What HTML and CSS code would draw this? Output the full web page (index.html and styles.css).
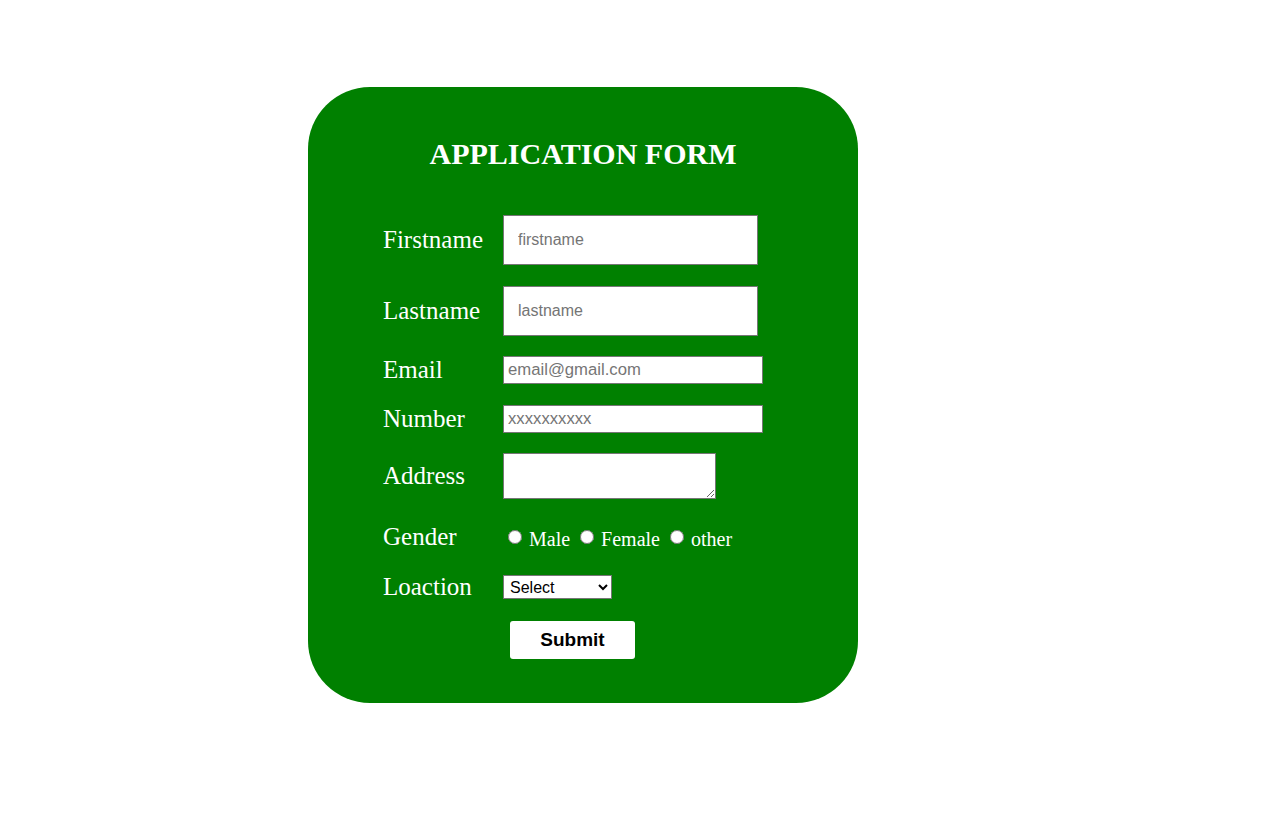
FILE: index.html
```html
<!DOCTYPE html>
<html>
<head>
<meta charset="utf-8">
<link rel="stylesheet" href="styles.css">
</head>
<body>
<div class="card">
  <h2 class="title">APPLICATION FORM</h2>
  <form class="form">
    <label class="lbl">Firstname</label>
    <div class="field"><input class="big" type="text" placeholder="firstname"></div>
    <label class="lbl">Lastname</label>
    <div class="field"><input class="big" type="text" placeholder="lastname"></div>
    <label class="lbl">Email</label>
    <div class="field"><input class="small" type="email" placeholder="email@gmail.com"></div>
    <label class="lbl">Number</label>
    <div class="field"><input class="small" type="text" placeholder="xxxxxxxxxx"></div>
    <label class="lbl">Address</label>
    <div class="field"><textarea class="area"></textarea></div>
    <label class="lbl">Gender</label>
    <div class="radios"><input type="radio" name="g" class="radio"> Male <input type="radio" name="g" class="radio"> Female <input type="radio" name="g" class="radio"> other</div>
    <label class="lbl">Loaction</label>
    <div class="field"><select class="sel"><option>Select</option></select></div>
    <div></div>
    <div class="field"><button type="button" class="submit">Submit</button></div>
  </form>
</div>
</body>
</html>
```
FILE: styles.css
```css
html, body {
  margin: 0;
  padding: 0;
  background: #ffffff;
}
body {
  font-family: "Liberation Serif", "Times New Roman", serif;
}
.card {
  margin: 87px 0 0 308px;
  width: 550px;
  height: 616px;
  box-sizing: border-box;
  background: #008000;
  border-radius: 62px;
  padding: 49px 0 0 75px;
}
.title {
  margin: 0 0 44px -75px;
  line-height: 35px;
  height: 35px;
  font-size: 30px;
  font-weight: bold;
  color: #ffffff;
  text-align: center;
}
.form {
  display: grid;
  grid-template-columns: 120px auto;
  row-gap: 20.5px;
  align-items: center;
  justify-items: start;
}
.lbl {
  color: #ffffff;
  font-size: 25px;
  line-height: 22px;
}
.field {
  display: flex;
  align-items: center;
}
.big {
  width: 255px;
  height: 50px;
  box-sizing: border-box;
  border: 1px solid #767676;
  padding: 0 14px;
  font-family: "Liberation Sans", Arial, sans-serif;
  font-size: 16px;
  margin: 0;
}
.small {
  width: 260px;
  height: 28px;
  box-sizing: border-box;
  border: 1px solid #767676;
  padding: 0 4px;
  font-family: "Liberation Sans", Arial, sans-serif;
  font-size: 16.7px;
  margin: 0;
}
.area {
  width: 213px;
  height: 46px;
  box-sizing: border-box;
  border: 1px solid #767676;
  margin: 0;
  resize: both;
}
.radios {
  color: #ffffff;
  font-size: 20px;
  line-height: 39px;
  height: 35px;
}
.radio {
  margin: 0 2px 0 5px;
  width: 14px;
  height: 14px;
  vertical-align: 2px;
}
.sel {
  width: 109px;
  height: 24px;
  box-sizing: border-box;
  border: 1px solid #767676;
  font-family: "Liberation Sans", Arial, sans-serif;
  font-size: 16px;
  background: #ffffff;
  color: #000000;
  margin: 0;
  padding: 0 2px;
}
.submit {
  margin: 1px 0 0 7px;
  width: 125px;
  height: 38px;
  border: none;
  border-radius: 3px;
  background: #ffffff;
  font-family: "Liberation Sans", Arial, sans-serif;
  font-size: 19px;
  font-weight: bold;
  color: #000000;
}
```
